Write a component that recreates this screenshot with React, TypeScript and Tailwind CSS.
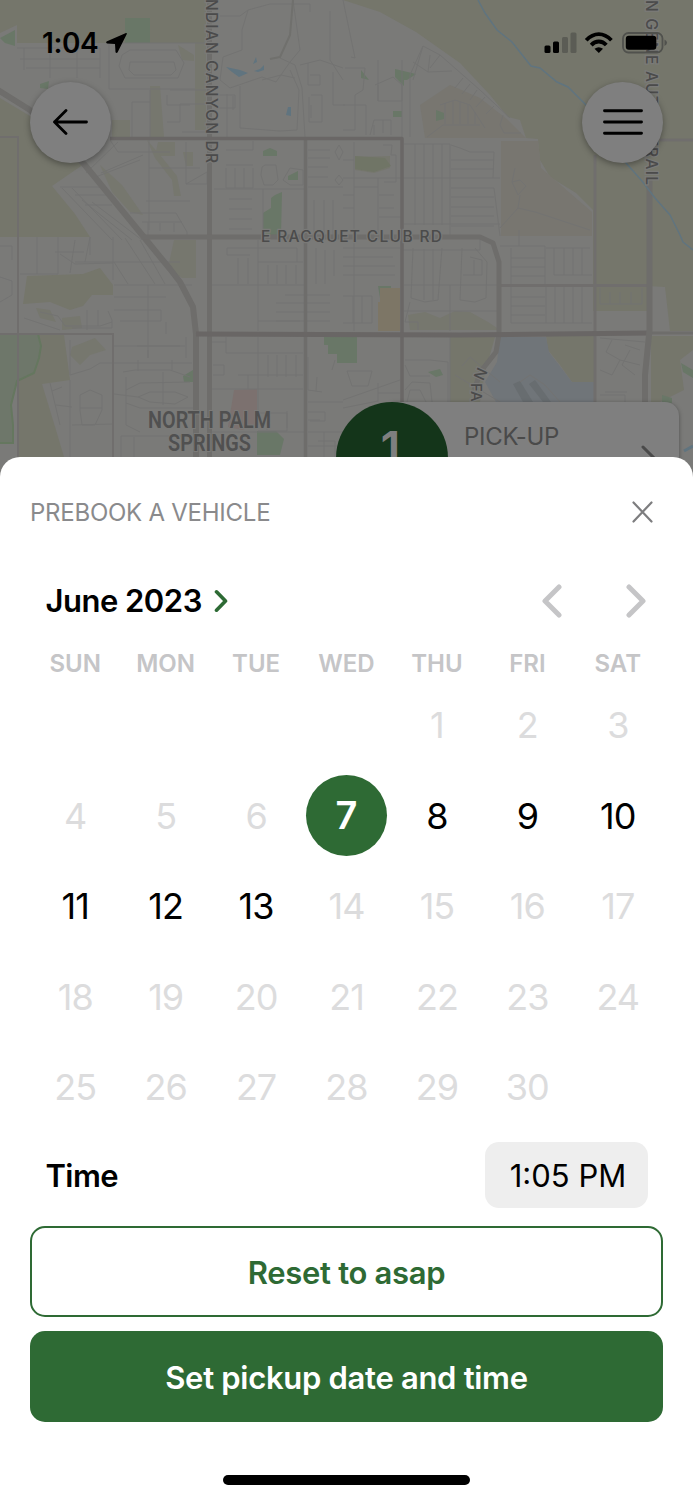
import { useState } from 'react'
import clsx from 'clsx'

const WEEKDAYS = ['SUN', 'MON', 'TUE', 'WED', 'THU', 'FRI', 'SAT']
const FIRST_WEEKDAY = 4
const DAYS_IN_MONTH = 30
const FIRST_BOOKABLE = 7
const LAST_BOOKABLE = 13

function MapBackground() {
  return (
    <svg
      className="absolute left-0 top-0"
      width="693"
      height="490"
      viewBox="0 0 693 490"
      fill="none"
    >
      <rect width="693" height="490" fill="#7a7a78" />

      {/* desert */}
      <g fill="#75766b">
        <path d="M0 0H206V43H17V25L0 33Z" />
        <path d="M343 0L380 12L416 32L460 63L490 95L508 117L520 120L526 138L538 139L540 160L550 177L576 193L593 210V311H648V286L665 287L670 331H693V0Z" />
        <path d="M0 98L30 116L84 164L52 186L75 214L90 237H0Z" />
        <path d="M27 276L83 274L100 268L113 285V295H92L83 306L70 310L50 302L23 304Z" />
        <path d="M18 335H64L70 380L42 384L56 430L64 457H18Z" />
        <path d="M546 335H595V382H572L560 365L548 350Z" />
        <path d="M450 337H495L485 372L480 402H450Z" />
        <path d="M651 336H693V350L680 360L684 390L660 402H651Z" />
      </g>
      <g fill="#76776e">
        <path d="M195 43H206V130H195ZM150 86H160L164 137H150ZM174 240H196V278H182L168 268ZM178 45L194 55V61L182 60ZM112 120H130V137H112Z" />
        <path d="M355 157L390 156V168L374 173L355 170Z" />
        <path d="M72 347L95 338L106 350L90 355L80 365L70 355ZM62 318L80 316L82 328L62 330ZM36 308L50 310L56 322L40 318Z" />
        <path d="M408 315L425 312L440 318L455 311L470 312L488 322L500 330L410 330ZM158 142H175V156H155ZM183 152H193V166H186Z" />
        <path d="M147 140L160 155L177 176L181 196H174L172 180L155 158ZM100 165L122 185L143 215L130 212L112 192Z" />
      </g>
      <g fill="#787670">
        <path d="M420 105L450 85L480 98L508 120L526 138H425Z" />
        <path d="M501 141H538L541 168L592 212V236H501Z" />
      </g>

      {/* parks */}
      <g fill="#697767">
        <rect x="125" y="18" width="25" height="25" />
        <path d="M0 38L15 30V46L5 43ZM40 84L49 81L48 89L40 88Z" />
        <path d="M275 195L282 192L281 235H263V213L271 208V198Z" />
        <path d="M263 151L270 148L277 151V156H263ZM288 176L298 171V180H288Z" />
        <path d="M324 337H357V363H337V354H328V345H324Z" />
        <path d="M257 431H276L284 439L280 455H257Z" />
        <path d="M395 69L416 74L407 80H404V86L395 77ZM393 111H402V117H393ZM436 110L444 113V119L436 121ZM361 70L369 80L361 78Z" />
        <path d="M428 372L440 369L443 375L436 377ZM681 363L693 370V378L683 372ZM662 395L672 398V403H662Z" />
        <path d="M378 286H391V298H380ZM183 376L193 370V382H184Z" />
      </g>
      <path
        d="M-4 334H38L41 346L39 358L34 373L17 381L11 405L13 425L13 443H-4Z"
        fill="#6e776a"
        stroke="#65775f"
        strokeWidth="2"
      />
      <path d="M355 156L385 158L391 166L374 172L355 169Z" fill="#707566" />

      {/* school, hospital, airport */}
      <path d="M380 288H400V331H378V302H380Z" fill="#7d7666" />
      <path d="M234 390L257 389V425L242 430L228 427Z" fill="#7c716f" />
      <path
        d="M500 337H546L549 352L572 382H596V402H496L485 382L497 362Z"
        fill="#707579"
      />
      <path d="M513 384L520 381L533 402H523ZM529 384L535 380L551 402H543Z" fill="#686d70" />

      {/* residential streets */}
      <g stroke="#737372" strokeWidth="1">
        <path d="M17 48H100V78M24 48V70M50 46V78M77 46V78M20 59H100M26 68H100M109 43V89H195M110 43H206M122 55L130 50H176L184 63L178 78H125L119 66ZM130 62H174L176 70L171 75H134L129 70ZM132 102V137M132 102H150M150 90V137M170 90H208M167 95V105H190M167 122H180V104H206M182 132H208" />
        <path d="M86 173L118 142M93 178L140 160M101 173L143 155M110 140L118 152H170M149 140V230M149 168H200M186 142V184L207 172V184H186M146 201H190M130 213H176L187 232V236M60 187H100M62 188L112 240M72 188L122 240M82 200L132 240M92 202L142 240M75 195H107M85 205L112 205M142 222H182M148 222V235M160 223V231M174 223V232" />
        <path d="M220 16H240L248 10L242 30V50L223 57L220 80L230 88L262 77L276 82L290 62L300 50L293 0M248 10L270 4H310V12M330 11V60L343 80M280 58L295 65L302 88L305 137M240 86V128L280 131L297 130L299 90L290 70M262 80L281 75L295 78M300 65L320 60L343 68M310 75H320V85H308V63M311 95H322V122H309V97M333 72V105M333 105H345M311 105V118M216 95H235V108H218M227 94V137M233 96V110" />
        <path d="M214 189H305M226 150H253V141M226 165H253M226 168V188H253V168M235 168V188M244 168V188M262 167L265 165H276L278 180L273 185H264L261 175ZM283 180L290 168L303 170V185H290ZM229 199H252M229 209H252M229 219H252M229 229H252M263 189V236M308 150H330M308 158H330M308 167H328M308 177H328M308 187H343M314 200V236M324 200V236M333 200V236M339 145L343 152L339 160L335 152ZM339 175L343 180L339 185L335 180Z" />
        <path d="M227 248H297V262M227 248V255H250M238 258V284M248 258V284M258 240V331M258 262H303M268 265V284M277 265V284M286 265V284M296 265V284M212 285H306M285 295H330M276 303H330M276 312H330M276 321H330M258 321H300M316 248V284M325 250V284M334 250V276M343 248H400M343 257H393M343 266H395M343 275H395" />
        <path d="M18 240V330M37 237V274M58 237V274H20M75 240L70 273M90 237L85 262M55 252H84M60 254L75 264L113 263M90 237V255M113 237V280M125 238L155 284M140 240L165 284M114 262L128 284M75 262H180M114 285H192M114 297H166M148 285V358M114 310H161V321H120M166 322V334M40 312L58 316L65 326H100L112 322M24 318L60 330M87 310V330M98 310V326M108 311L112 320V328H72M0 277L12 281V295L0 302M0 246H12V260" />
        <path d="M70 340V375L90 369L100 363H192M114 346H185M137 346H180M148 350V358M186 337V358M138 360V371M172 360V370M123 372L135 370H170L190 377M126 377V425L140 432M126 390L140 383L190 382M138 397L150 392H175L188 397L175 404L150 402ZM163 372V405M126 403L140 408H194M114 394L138 397M80 395L90 390L102 395V410L95 425H82L80 410ZM80 408H102M50 383L60 425M52 391L62 387M56 405L72 407M70 380V457M72 425L114 424M121 457V436H190M134 437V457" />
        <path d="M226 337V353H303M226 342H212M258 337V425M268 355V377M277 355V377M286 355V377M296 355V377M213 365H224V375H213M212 389H303M238 375H303M248 375V389M258 413H287V428M267 410V430M287 411V431H258M212 432H306M308 357V390L322 392M316 391L317 377M308 402H343M308 412H325V421H310M308 432H343M308 420H320M332 370L335 360M318 441H335V457M324 432V457M308 446H343" />
        <path d="M347 371H372L368 386H352ZM378 383V402M343 400L400 380M343 408L378 401M378 393H400M405 360H430L448 362V402M450 337V402M405 390L412 382L430 383L432 402M407 402L410 390H420L426 402M405 365L410 376H430" />
        <path d="M343 0L355 58L351 57M345 68H365L363 90L355 95V130H343M343 105H366V135M370 135L374 120H391V135M374 125V135M383 120V133M375 85L393 77L402 85V101H378V85M378 101V60M402 60V137M413 80L423 46L440 55L480 90L510 118M423 46L410 75V137M428 72L452 71M428 72L413 62M428 72L430 55M440 55L430 68M463 78L455 88M470 84L462 94M477 90L470 100M485 97L476 107M494 106L486 114M503 115L500 125L504 133H521M440 105L455 100L470 105L485 128M445 103V124M453 101V124M460 102V124M468 105V124M475 112V124M427 137L443 125H480" />
        <path d="M354 142V236M343 160H354M343 178H500M343 195H354M343 208H354M383 145L392 145L391 155H396V182H384M378 178V236M379 195H394M379 208H394M379 217H402M354 187H378M404 144H450M415 144V225M424 144V225M433 144V225M442 144V225M450 144V236M404 224H500M451 145L460 148L470 152H494L493 178M451 160H494M451 169H494M451 188H494M451 197H494M451 207H494M451 216H494M451 226H494M494 188L500 236M515 168L512 182L520 180L526 186L518 195L512 182M520 195L518 208L500 228M518 208L535 212L590 230" />
        <path d="M354 237V331M403 250H480V236M413 248L411 298L425 302L438 300L442 248M424 249V300M433 249V300M462 248L460 300L475 302L486 298L487 262L475 248M470 257L482 260V275H463M474 260V275M500 246H545V285M511 248V285M511 258H545M511 267H545M511 276H545M519 230V246M546 248H590M554 248V275H592M564 248V275M573 248V275M582 248V275M511 287V323H592M511 297H545M511 306H545M511 315H545M546 287V323M555 287V323M564 287V323M573 287V323M582 287V323M343 296H372V323H343M353 296V323M362 296V323M404 285H500M404 311H500M410 302L405 322H418V330M450 285V331M600 288V304H642V288M610 292V304M620 292V304M631 292V304" />
        <path d="M600 338L645 342M612 340L606 352L620 360L640 365M620 360L612 375L600 370M630 350L622 365L635 375M640 350L625 345M600 395H625V402M605 392H627M462 366L470 357L500 382M455 375L530 420M520 382L530 375L545 385L560 402" />
      </g>

      {/* section lines */}
      <g stroke="#706e6d" strokeWidth="2">
        <path d="M0 137H18V457M0 334H113V457M147 138H110" />
        <path d="M595 155V457" strokeWidth="3" />
        <path d="M655 140H693M500 285.500H649" strokeWidth="3" />
      </g>

      {/* arterials */}
      <g stroke="#6e6d6b" strokeLinejoin="round">
        <path d="M-2 90L30 110L84 164L143 236L170 269L180 282L193 307L196 334V460" strokeWidth="6" />
        <path d="M209.500 0V460" strokeWidth="5" />
        <path d="M305.500 139V460" strokeWidth="3.500" />
        <path d="M143 237H480L493 243L499 262L499 334L496 352L481 371L474 390" strokeWidth="5" />
        <path d="M110 138.500H402V460" strokeWidth="3.500" stroke="#6a6766" />
        <path d="M196 334L460 335L650 333" strokeWidth="5" stroke="#696665" />
        <path d="M648 333H693" strokeWidth="3" />
        <path d="M649.500 180V330L645 375V460" strokeWidth="6" />
        <path d="M293 0L290 35L280 57L270 59" strokeWidth="2" stroke="#70706d" />
      </g>

      {/* water */}
      <g stroke="#60747f" strokeWidth="1.500">
        <path d="M478 0L485 13L497 30L512 42L531 66L540 68L557 82L568 87L586 105L626 163L642 181L655 198L670 215L680 235L683 242L693 250" />
        <path d="M684 451L693 446" strokeWidth="3" />
      </g>
      <path
        d="M226 67L240 70L248 73L239 77L232 72ZM254 71L260 69L264 65V70L258 72ZM256 57L257 62L253 64ZM288 107H291V116L286 115Z"
        fill="#60747f"
      />

      {/* labels */}
      <g
        fill="#4b4b4b"
        stroke="#7a7a78"
        strokeWidth="2.500"
        paintOrder="stroke"
        className="font-[Inter,sans-serif] font-medium"
      >
        <text transform="translate(206 -1) rotate(90)" fontSize="15.500" textLength="164">
          NDIAN CANYON DR
        </text>
        <text transform="translate(645.500 0) rotate(90)" fontSize="15.500" textLength="185">
          N GENE AUTRY TRAIL
        </text>
        <text x="261" y="241.500" fontSize="15.500" textLength="181">
          E RACQUET CLUB RD
        </text>
        <text transform="translate(478 366.500) rotate(115)" fontSize="15">
          N
        </text>
        <text transform="translate(470.500 383) rotate(90)" fontSize="15" letterSpacing="0.500">
          FA
        </text>
      </g>
      <g
        fill="#505050"
        stroke="#7a7a78"
        strokeWidth="2"
        paintOrder="stroke"
        className="font-[Roboto,sans-serif] font-semibold"
      >
        <text x="148" y="427.500" fontSize="23" textLength="123" lengthAdjust="spacingAndGlyphs">
          NORTH PALM
        </text>
        <text x="168" y="450.500" fontSize="23" textLength="83" lengthAdjust="spacingAndGlyphs">
          SPRINGS
        </text>
      </g>
    </svg>
  )
}

function StatusBar() {
  return (
    <div className="flex h-[82px] items-center justify-between pl-[42px] pr-[25px] pt-[4px]">
      <div className="flex items-center gap-[7px]">
        <span className="text-[28px] font-semibold leading-none tracking-[-0.4px]">
          1:04
        </span>
        <svg width="23" height="22" viewBox="0 0 23 22">
          <path
            d="M21 1L1.500 9.500Q0.500 11 2 11.500L10 12L10.500 20Q11 21.500 12.500 20.500L21.800 2Q22 0.500 21 1Z"
            fill="black"
          />
        </svg>
      </div>
      <div className="flex items-center">
        <svg width="33" height="22" viewBox="0 0 33 22">
          <rect x="0.500" y="13.500" width="6" height="7.500" rx="1.500" />
          <rect x="9" y="9.500" width="6" height="11.500" rx="1.500" />
          <g fill="#5b5c55">
            <rect x="18" y="5" width="6" height="16" rx="1.500" />
            <rect x="26.500" y="0.500" width="6" height="20.500" rx="1.500" />
          </g>
        </svg>
        <svg className="ml-[7px]" width="30" height="22" viewBox="0 0 30 22" fill="none">
          <g stroke="black" strokeWidth="3.800">
            <path d="M2.200 8.300Q8 2.200 14.800 2.200T27.400 8.300" />
            <path d="M7.200 13.100Q10.500 9.500 14.800 9.500T22.300 13.100" />
          </g>
          <path d="M10.500 16.800Q14.800 13.500 19 16.800L14.800 21Z" fill="black" />
        </svg>
        <svg className="ml-[8px]" width="46" height="22" viewBox="0 0 46 22" fill="none">
          <rect x="1" y="1" width="39.500" height="19.500" rx="5.500" stroke="#50514d" strokeWidth="1.800" />
          <rect x="3.800" y="3.800" width="30.500" height="14" rx="3" fill="black" />
          <path d="M42.500 7.500Q47.500 10.700 42.500 14Z" fill="#50514d" />
        </svg>
      </div>
    </div>
  )
}

function MapHeader() {
  return (
    <div className="relative h-[457px]">
      <StatusBar />
      <div className="flex justify-between px-[30px]">
        <button className="flex size-[81px] items-center justify-center rounded-full bg-[#7f7f7f] pb-[2px] shadow-[0_2px_6px_rgba(0,0,0,0.35)]">
          <svg width="36" height="28" viewBox="0 0 36 28" fill="none">
            <path
              d="M33.500 14H1.500M13 2.500L1.500 14L13 25.500"
              stroke="black"
              strokeWidth="2.800"
              strokeLinecap="round"
              strokeLinejoin="round"
            />
          </svg>
        </button>
        <button className="flex size-[81px] items-center justify-center rounded-full bg-[#7f7f7f] pb-[2px] shadow-[0_2px_6px_rgba(0,0,0,0.35)]">
          <svg width="40" height="28" viewBox="0 0 40 28" fill="none">
            <path
              d="M1.500 2.800H38.500M1.500 14H38.500M1.500 25.200H38.500"
              stroke="black"
              strokeWidth="2.900"
              strokeLinecap="round"
            />
          </svg>
        </button>
      </div>
      <div className="ml-[336px] mr-[14px] mt-[239px] flex h-[55px] overflow-visible">
        <div className="z-10 flex h-[88px] w-[112px] shrink-0 justify-center rounded-t-full bg-[#14351a] pr-[3px] pt-[22px] text-[47px] font-semibold leading-none text-[#7f7f7f]">
          1
        </div>
        <div className="-ml-[56px] flex h-[88px] flex-1 justify-between rounded-tr-[14px] bg-[#7f7f7f] pl-[72px] pr-[22px] pt-[22px] shadow-[0_1px_4px_rgba(0,0,0,0.35)]">
          <span className="text-[24px] leading-[26px] tracking-[-0.3px] text-[#4a4a4a]">
            PICK-UP
          </span>
          <svg className="mt-[20px]" width="16" height="28" viewBox="0 0 16 28" fill="none">
            <path
              d="M2 3L13 14L2 25"
              stroke="#4a4a4a"
              strokeWidth="3"
              strokeLinecap="round"
            />
          </svg>
        </div>
      </div>
    </div>
  )
}

interface ChevronProps {
  path: string
  className: string
  strokeWidth: number
  viewBox: string
}

function Chevron({ path, className, strokeWidth, viewBox }: ChevronProps) {
  return (
    <svg className={className} viewBox={viewBox} fill="none">
      <path
        d={path}
        stroke="currentColor"
        strokeWidth={strokeWidth}
        strokeLinecap="round"
        strokeLinejoin="round"
      />
    </svg>
  )
}

export default function App() {
  const [selected, setSelected] = useState(7)

  const days = Array.from({ length: DAYS_IN_MONTH }, (_, i) => i + 1)

  return (
    <div className="relative flex h-[1500px] w-[693px] flex-col overflow-hidden bg-[#7a7a78] font-[Inter,sans-serif] text-black">
      <MapBackground />
      <MapHeader />
      <div className="z-20 flex flex-1 flex-col rounded-t-[20px] bg-white px-[30px]">
        <div className="flex h-[110px] items-center justify-between pr-[10px]">
          <h2 className="pt-px text-[24px] tracking-[-0.25px] text-[#8a8a8c]">
            PREBOOK A VEHICLE
          </h2>
          <Chevron
            className="h-[22px] w-[21px] text-[#7d7d7f]"
            viewBox="0 0 21 22"
            path="M1.500 1.500L19.500 20.500M19.500 1.500L1.500 20.500"
            strokeWidth={2.2}
          />
        </div>

        <div className="flex h-[68px] items-center justify-between pl-[15.500px] pr-[17px]">
          <div className="flex items-center gap-[12px]">
            <span className="text-[31px] font-semibold tracking-[-0.5px]">
              June 2023
            </span>
            <Chevron
              className="h-[24px] w-[15px] text-[#2d6a34]"
              viewBox="0 0 15 24"
              path="M2.500 2.800L11.500 12L2.500 21.200"
              strokeWidth={3.6}
            />
          </div>
          <div className="flex items-center gap-[64px] text-[#c5c5c7]">
            <Chevron
              className="h-[34px] w-[20px]"
              viewBox="0 0 20 34"
              path="M17 3L3 17L17 31"
              strokeWidth={5}
            />
            <Chevron
              className="h-[34px] w-[20px]"
              viewBox="0 0 20 34"
              path="M3 3L17 17L3 31"
              strokeWidth={5}
            />
          </div>
        </div>

        <div className="mt-[13px] grid grid-cols-7 text-center">
          {WEEKDAYS.map((day) => (
            <div
              key={day}
              className="text-[24px] font-semibold leading-[32px] text-[#c5c5c7]"
            >
              {day}
            </div>
          ))}
        </div>

        <div className="grid auto-rows-[90.5px] grid-cols-7">
          {Array.from({ length: FIRST_WEEKDAY }, (_, i) => (
            <div key={`blank-${i}`} />
          ))}
          {days.map((day) => {
            const bookable = day >= FIRST_BOOKABLE && day <= LAST_BOOKABLE
            return (
              <button
                key={day}
                disabled={!bookable}
                onClick={() => setSelected(day)}
                className={clsx(
                  'flex size-[81px] items-center justify-center self-center justify-self-center rounded-full',
                  day === selected
                    ? 'bg-[#2e6a34] text-[38px] font-semibold text-white'
                    : 'text-[36px] tracking-[-1px]',
                  day !== selected && bookable && 'text-black',
                  !bookable && 'text-[#dcdcdd]',
                )}
              >
                {day}
              </button>
            )
          })}
        </div>

        <div className="mt-[9px] flex h-[66px] items-center justify-between pl-[15.500px] pr-[15px]">
          <span className="pt-[3px] text-[31px] font-semibold tracking-[-0.6px]">
            Time
          </span>
          <button className="h-[66px] w-[163px] rounded-[14px] bg-[#eeeeee] pl-[3px] pt-[3px] text-[31px]">
            1:05 PM
          </button>
        </div>

        <button className="mt-[18.500px] h-[91px] rounded-[15px] border-2 border-[#2e6a34] pt-[3px] text-[31px] font-semibold tracking-[-0.3px] text-[#2e6a34]">
          Reset to asap
        </button>
        <button className="mt-[14px] h-[91px] rounded-[15px] bg-[#2e6a34] pt-[3px] text-[31px] font-semibold tracking-[-0.3px] text-white">
          Set pickup date and time
        </button>
        <div className="mx-auto mt-[53px] h-[10px] w-[247px] rounded-full bg-black" />
      </div>
    </div>
  )
}
